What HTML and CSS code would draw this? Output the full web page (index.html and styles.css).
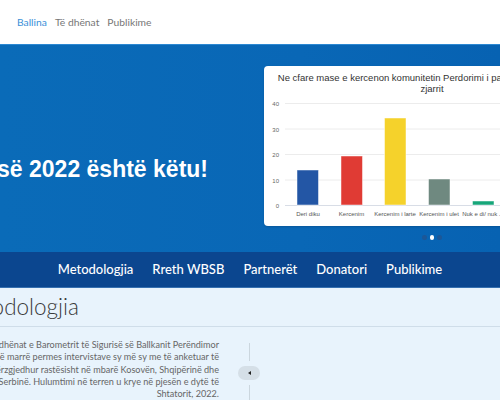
FILE: index.html
```html
<!DOCTYPE html>
<html lang="sq">
<head>
<meta charset="utf-8">
<title>Barometri i Sigurisë</title>
<link rel="stylesheet" href="styles.css">
</head>
<body>
<header class="topbar">
  <nav class="topnav">
    <a class="topnav-link is-active">Ballina</a>
    <a class="topnav-link">Të dhënat</a>
    <a class="topnav-link">Publikime</a>
  </nav>
</header>

<section class="hero">
  <div class="hero-left">
    <h1 class="hero-title">Barometri i Sigurisë 2022 është këtu!</h1>
  </div>
  <div class="hero-right">
    <div class="chart-card">
      <div class="chart-title">Ne cfare mase e kercenon komunitetin Perdorimi i paligjshem i armeve te<br>zjarrit</div>
      <svg class="chart-svg" width="336" height="140" viewBox="0 0 336 140">
        <g class="grid">
          <line x1="21" y1="15.5" x2="336" y2="15.5"/>
          <line x1="21" y1="41" x2="336" y2="41"/>
          <line x1="21" y1="66.5" x2="336" y2="66.5"/>
          <line x1="21" y1="92" x2="336" y2="92"/>
        </g>
        <line class="axis" x1="21" y1="117.5" x2="336" y2="117.5"/>
        <g class="ylabels">
          <text x="15" y="18">40</text>
          <text x="15" y="43.5">30</text>
          <text x="15" y="69">20</text>
          <text x="15" y="94.5">10</text>
          <text x="15" y="120">0</text>
        </g>
        <rect class="bar" x="33" y="82" width="21.5" height="35" fill="#2356a5"/>
        <rect class="bar" x="77" y="68" width="21.5" height="49" fill="#e03b34"/>
        <rect class="bar" x="120.5" y="30" width="21.5" height="87" fill="#f5d22b"/>
        <rect class="bar" x="164.5" y="91" width="21.5" height="26" fill="#6f8980"/>
        <rect class="bar" x="208.5" y="113" width="21.5" height="4" fill="#17a67a"/>
        <g class="xlabels">
          <text x="44" y="128">Deri diku</text>
          <text x="87.5" y="128">Kercenim</text>
          <text x="131" y="128">Kercenim i larte</text>
          <text x="175" y="128">Kercenim i ulet</text>
          <text x="219" y="128">Nuk e di/ nuk ...</text>
        </g>
      </svg>
    </div>
    <div class="dots">
      <span class="dot"></span>
      <span class="dot is-active"></span>
      <span class="dot"></span>
    </div>
  </div>
</section>

<nav class="mainnav">
  <a class="mainnav-link">Metodologjia</a>
  <a class="mainnav-link">Rreth WBSB</a>
  <a class="mainnav-link">Partnerët</a>
  <a class="mainnav-link">Donatori</a>
  <a class="mainnav-link">Publikime</a>
</nav>

<section class="method">
  <div class="method-head">
    <h2 class="method-title">Metodologjia</h2>
  </div>
  <div class="method-body">
    <div class="method-text">
      <span class="line">Të dhënat e Barometrit të Sigurisë së Ballkanit Perëndimor</span>
      <span class="line">janë marrë permes intervistave sy më sy me të anketuar të</span>
      <span class="line">përzgjedhur rastësisht në mbarë Kosovën, Shqipërinë dhe</span>
      <span class="line">Serbinë. Hulumtimi në terren u krye në pjesën e dytë të</span>
      <span class="line">Shtatorit, 2022.</span>
    </div>
    <div class="timeline">
      <span class="tl-line tl-top"></span>
      <span class="tl-pill"><span class="tl-arrow"></span></span>
      <span class="tl-line tl-bottom"></span>
    </div>
  </div>
</section>
</body>
</html>
```

FILE: styles.css
```css
* { box-sizing: border-box; }
html, body { margin: 0; padding: 0; }
body {
  width: 500px;
  height: 400px;
  overflow: hidden;
  background: #e8f3fc;
  font-family: Lato, "Open Sans", sans-serif;
}

.topbar {
  height: 44px;
  background: #ffffff;
  display: flex;
  align-items: center;
  padding-left: 17px;
}
.topnav { display: flex; gap: 8px; }
.topnav-link {
  font-size: 10.3px;
  color: #777777;
  line-height: 1;
}
.topnav-link.is-active { color: #3a8fd8; }

.hero {
  height: 208px;
  background: linear-gradient(90deg, #0a6bb8 0%, #0967b6 60%, #0762b2 100%);
  border-top: 1px solid #2c88d2;
  display: flex;
  align-items: flex-start;
  padding-top: 21px;
}
.hero-left {
  width: 264px;
  flex-shrink: 0;
  display: flex;
  justify-content: flex-end;
  padding-right: 56px;
  padding-top: 90px;
}
.hero-title {
  margin: 0;
  white-space: nowrap;
  color: #ffffff;
  font-family: "Liberation Sans", Arial, sans-serif;
  font-weight: 700;
  font-size: 23px;
  line-height: 26px;
  flex-shrink: 0;
}
.hero-right {
  display: flex;
  flex-direction: column;
  align-items: center;
  flex-shrink: 0;
}
.chart-card {
  width: 336px;
  height: 160px;
  background: #ffffff;
  border-radius: 4px;
  padding-top: 6px;
  box-shadow: 0 1px 2px rgba(0,0,0,0.15);
}
.chart-title {
  font-family: "Liberation Sans", Arial, sans-serif;
  font-size: 9.5px;
  line-height: 11px;
  color: #333333;
  text-align: center;
  white-space: nowrap;
  height: 22px;
}
.chart-svg { display: block; margin-top: -6px; }
.grid line { stroke: #ececec; stroke-width: 1; }
.axis { stroke: #d8dde6; stroke-width: 1; }
.ylabels text {
  font-family: "Liberation Sans", Arial, sans-serif;
  font-size: 6px;
  fill: #666666;
  text-anchor: end;
}
.xlabels text {
  font-family: "Liberation Sans", Arial, sans-serif;
  font-size: 6px;
  fill: #555555;
  text-anchor: middle;
}
.bar { stroke: rgba(255,255,255,0.6); stroke-width: 0.8; }

.dots {
  display: flex;
  gap: 3px;
  margin-top: 9px;
}
.dot {
  width: 4.5px;
  height: 4.5px;
  border-radius: 50%;
  background: #1c5797;
}
.dot.is-active { background: #ffffff; }

.mainnav {
  height: 36px;
  background: #0b468f;
  display: flex;
  justify-content: center;
  align-items: center;
  gap: 19px;
  border-bottom: 1px solid #3670b0;
}
.mainnav-link {
  color: #ffffff;
  font-size: 13px;
  font-weight: 500;
  line-height: 1;
}

.method { background: #e8f3fc; }
.method-head {
  height: 39px;
  border-bottom: 1px solid #cfdde9;
  display: flex;
  align-items: center;
}
.method-title {
  width: 79px;
  display: flex;
  justify-content: flex-end;
  margin: 0;
  white-space: nowrap;
  font-size: 22.5px;
  font-weight: 300;
  color: #3a3a3a;
  line-height: 26px;
}
.method-body {
  display: flex;
  padding-top: 12px;
}
.method-text {
  width: 219px;
  flex-shrink: 0;
  display: flex;
  flex-direction: column;
  align-items: flex-end;
  font-size: 9.1px;
  line-height: 12.3px;
  color: #666666;
}
.line { white-space: nowrap; flex-shrink: 0; }
.timeline {
  margin-left: 19px;
  width: 22px;
  display: flex;
  flex-direction: column;
  align-items: center;
  padding-top: 4px;
}
.tl-line {
  width: 1px;
  background: #cbd6de;
}
.tl-top { height: 18px; }
.tl-bottom { height: 30px; }
.tl-pill {
  width: 22px;
  height: 14px;
  border-radius: 7px;
  background: #d5dfe7;
  margin: 5px 0;
  display: flex;
  align-items: center;
  justify-content: center;
}
.tl-arrow {
  width: 0;
  height: 0;
  border-top: 2px solid transparent;
  border-bottom: 2px solid transparent;
  border-right: 3px solid #222222;
}
```
